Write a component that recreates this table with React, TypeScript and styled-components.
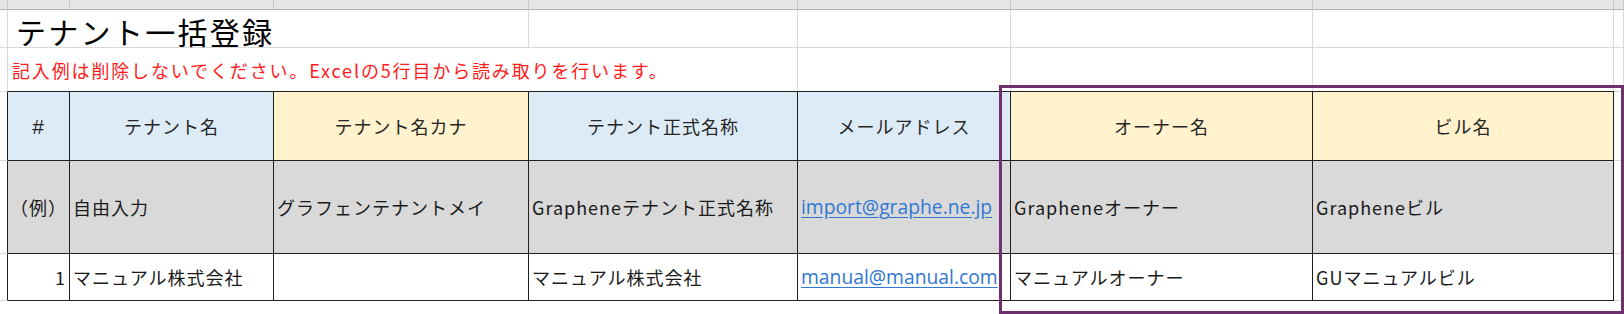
import React from "react";
import styled, { createGlobalStyle } from "styled-components";

const GlobalStyle = createGlobalStyle`
  html, body {
    margin: 0;
    padding: 0;
    background: #ffffff;
  }
  body {
    width: 1624px;
    height: 314px;
    overflow: hidden;
    font-family: "Noto Sans CJK JP", "Noto Sans", sans-serif;
  }
  * { box-sizing: border-box; }
`;

const COLS = "8px 62px 204px 255px 269px 213px 302px 301px 10px";
const GRID_LIGHT = "#d9d9d9";
const LINE_DARK = "#1e1e1e";
const BLUE = "#ddebf7";
const YELLOW = "#fff2cc";
const GRAY = "#d9d9d9";

const Sheet = styled.div`
  position: relative;
  width: 1624px;
  height: 314px;
  background: #ffffff;
  overflow: hidden;
`;

const ColumnStrip = styled.div`
  display: grid;
  grid-template-columns: ${COLS};
  height: 10px;
  background: #e6e6e6;
  border-bottom: 1px solid #b4b4b4;
`;

const StripCell = styled.div`
  border-right: 1px solid #c8c8c8;
`;

const SheetRow = styled.div<{ $h: number }>`
  display: grid;
  grid-template-columns: ${COLS};
  height: ${(p) => p.$h}px;
`;

const SheetCell = styled.div<{ $span?: number; $bottom?: boolean }>`
  grid-column: span ${(p) => p.$span ?? 1};
  display: flex;
  align-items: center;
  min-width: 0;
  border-right: 1px solid ${GRID_LIGHT};
  border-bottom: ${(p) => (p.$bottom ? `1px solid ${GRID_LIGHT}` : "none")};
  white-space: nowrap;
`;

const TitleText = styled.span`
  padding: 4px 0 0 8px;
  font-size: 30px;
  letter-spacing: 2.3px;
  color: #000000;
  line-height: 1;
`;

const NoteText = styled.span`
  padding-left: 4px;
  font-size: 18px;
  letter-spacing: 1.85px;
  color: #ff1a1a;
  line-height: 1;
`;

const TableRow = styled.div<{ $h: number }>`
  display: grid;
  grid-template-columns: ${COLS};
  height: ${(p) => p.$h}px;
`;

const EdgeCell = styled.div<{ $left?: boolean; $top?: boolean }>`
  border-bottom: 1px solid ${GRID_LIGHT};
  border-top: ${(p) => (p.$top ? `1px solid ${GRID_LIGHT}` : "none")};
  border-right: ${(p) => (p.$left ? `1px solid ${LINE_DARK}` : "none")};
`;

const DataCell = styled.div<{
  $bg?: string;
  $align?: "left" | "center" | "right";
  $top?: boolean;
}>`
  display: flex;
  align-items: center;
  justify-content: ${(p) =>
    p.$align === "center" ? "center" : p.$align === "right" ? "flex-end" : "flex-start"};
  padding: 0 3px;
  min-width: 0;
  overflow: hidden;
  white-space: nowrap;
  background: ${(p) => p.$bg ?? "#ffffff"};
  border-right: 1px solid ${LINE_DARK};
  border-bottom: 1px solid ${LINE_DARK};
  border-top: ${(p) => (p.$top ? `1px solid ${LINE_DARK}` : "none")};
  font-size: 18px;
  letter-spacing: 1px;
  color: #1a1a1a;
  line-height: 1;
`;

const HeaderLabel = styled.span`
  color: #262626;
`;

const HashLabel = styled.span`
  font-family: "Liberation Sans", "Noto Sans", sans-serif;
  font-size: 21px;
  color: #262626;
`;

const MailLink = styled.a`
  font-family: "Open Sans", "Noto Sans", sans-serif;
  font-size: 19.3px;
  letter-spacing: 0;
  color: #2f78d4;
  text-decoration: underline;
  text-underline-offset: 3px;
`;

const Highlight = styled.div`
  position: absolute;
  left: 999px;
  top: 85px;
  width: 625px;
  height: 229px;
  border: 3px solid #70306f;
  pointer-events: none;
`;

type Cell = { text: string; link?: boolean; align?: "left" | "center" | "right" };

const headers: { label: string; bg: string }[] = [
  { label: "#", bg: BLUE },
  { label: "テナント名", bg: BLUE },
  { label: "テナント名カナ", bg: YELLOW },
  { label: "テナント正式名称", bg: BLUE },
  { label: "メールアドレス", bg: BLUE },
  { label: "オーナー名", bg: YELLOW },
  { label: "ビル名", bg: YELLOW },
];

const exampleRow: Cell[] = [
  { text: "（例）", align: "center" },
  { text: "自由入力" },
  { text: "グラフェンテナントメイ" },
  { text: "Grapheneテナント正式名称" },
  { text: "import@graphe.ne.jp", link: true },
  { text: "Grapheneオーナー" },
  { text: "Grapheneビル" },
];

const firstRow: Cell[] = [
  { text: "1", align: "right" },
  { text: "マニュアル株式会社" },
  { text: "" },
  { text: "マニュアル株式会社" },
  { text: "manual@manual.com", link: true },
  { text: "マニュアルオーナー" },
  { text: "GUマニュアルビル" },
];

function renderCells(cells: Cell[], bg: string) {
  return cells.map((c, i) => (
    <DataCell key={i} $bg={bg} $align={c.align ?? "left"}>
      {c.link ? <MailLink href="#">{c.text}</MailLink> : c.text}
    </DataCell>
  ));
}

export default function App() {
  return (
    <>
      <GlobalStyle />
      <Sheet>
        <ColumnStrip>
          {Array.from({ length: 9 }).map((_, i) => (
            <StripCell key={i} />
          ))}
        </ColumnStrip>

        <SheetRow $h={38}>
          <SheetCell $bottom />
          <SheetCell $span={3} $bottom>
            <TitleText>テナント一括登録</TitleText>
          </SheetCell>
          <SheetCell $bottom />
          <SheetCell $bottom />
          <SheetCell $bottom />
          <SheetCell $bottom />
          <SheetCell $bottom />
        </SheetRow>

        <SheetRow $h={43}>
          <SheetCell />
          <SheetCell $span={4}>
            <NoteText>記入例は削除しないでください。Excelの5行目から読み取りを行います。</NoteText>
          </SheetCell>
          <SheetCell />
          <SheetCell />
          <SheetCell />
          <SheetCell />
        </SheetRow>

        <TableRow $h={70}>
          <EdgeCell $left $top />
          {headers.map((h, i) => (
            <DataCell key={i} $bg={h.bg} $align="center" $top>
              {h.label === "#" ? <HashLabel>#</HashLabel> : <HeaderLabel>{h.label}</HeaderLabel>}
            </DataCell>
          ))}
          <EdgeCell $top />
        </TableRow>

        <TableRow $h={93}>
          <EdgeCell $left />
          {renderCells(exampleRow, GRAY)}
          <EdgeCell />
        </TableRow>

        <TableRow $h={47}>
          <EdgeCell $left />
          {renderCells(firstRow, "#ffffff")}
          <EdgeCell />
        </TableRow>

        <Highlight />
      </Sheet>
    </>
  );
}
